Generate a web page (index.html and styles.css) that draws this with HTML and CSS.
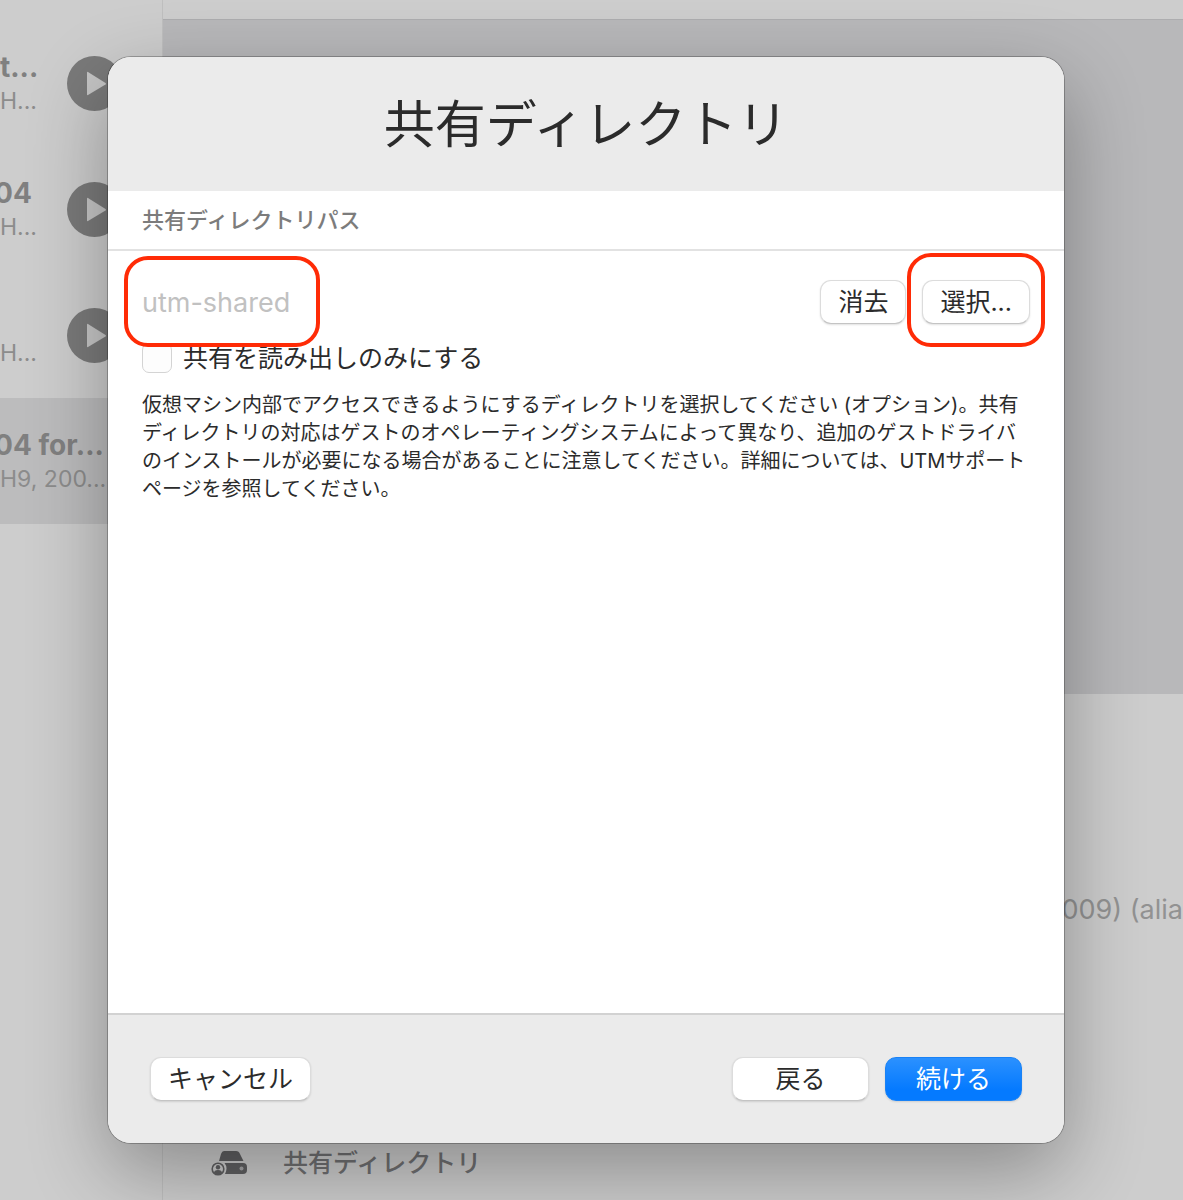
FILE: index.html
```html
<!DOCTYPE html>
<html lang="ja">
<head>
  <meta charset="UTF-8">
  <meta name="viewport" content="width=device-width, initial-scale=1.0">
  <title>共有ディレクトリ</title>
  <link rel="stylesheet" href="styles.css">
</head>
<body>
  <div class="window">
    <aside class="sidebar">
      <div class="vm">
        <div class="vm-text">
          <div class="vm-name">t...</div>
          <div class="vm-info">H...</div>
        </div>
        <button class="play" aria-label="Play">
          <svg viewBox="0 0 55 55" width="55" height="55"><circle cx="27.5" cy="27.5" r="27.5" fill="#7a7a7a"/><path d="M20 16.5v22q0 1 1 .5l17.500-10.500q1-.7 0-1.400L21 16q-1-.5-1 .5z" fill="#c6c6c6"/></svg>
        </button>
      </div>
      <div class="vm">
        <div class="vm-text">
          <div class="vm-name cut">04</div>
          <div class="vm-info">H...</div>
        </div>
        <button class="play" aria-label="Play">
          <svg viewBox="0 0 55 55" width="55" height="55"><circle cx="27.5" cy="27.5" r="27.5" fill="#7a7a7a"/><path d="M20 16.5v22q0 1 1 .5l17.500-10.500q1-.7 0-1.400L21 16q-1-.5-1 .5z" fill="#c6c6c6"/></svg>
        </button>
      </div>
      <div class="vm">
        <div class="vm-text">
          <div class="vm-name"></div>
          <div class="vm-info">H...</div>
        </div>
        <button class="play" aria-label="Play">
          <svg viewBox="0 0 55 55" width="55" height="55"><circle cx="27.5" cy="27.5" r="27.5" fill="#7a7a7a"/><path d="M20 16.5v22q0 1 1 .5l17.500-10.500q1-.7 0-1.400L21 16q-1-.5-1 .5z" fill="#c6c6c6"/></svg>
        </button>
      </div>
      <div class="vm selected">
        <div class="vm-text">
          <div class="vm-name cut">04 for...</div>
          <div class="vm-info">H9, 200...</div>
        </div>
      </div>
    </aside>

    <main class="main">
      <div class="toolbar"></div>
      <div class="screen"></div>
      <div class="details">
        <div class="machine">009) (alia</div>
        <div class="detail-row">
          <svg class="drive-icon" viewBox="0 0 36 26" width="36" height="26">
            <path d="M13 1h12q3 0 4 3l3.500 7H8l2-7q1-3 3-3z" fill="#606062"/>
            <path d="M13.500 13H32q4 0 4 4v3q0 4-4 4H14q1.500-3 1.500-5.500 0-3-2-5.500z" fill="#606062"/>
            <circle cx="30.500" cy="18.500" r="2" fill="#a5a5a7"/>
            <circle cx="7" cy="19" r="5.800" fill="none" stroke="#606062" stroke-width="1.600"/>
            <circle cx="7" cy="17.300" r="2.200" fill="#606062"/>
            <path d="M3 23q0-3 4-3t4 3q-4 3.500-8 0z" fill="#606062"/>
          </svg>
          <span>共有ディレクトリ</span>
        </div>
      </div>
    </main>
  </div>

  <form class="dialog">
    <header class="dialog-header">
      <h1>共有ディレクトリ</h1>
    </header>
    <h2 class="section-title">共有ディレクトリパス</h2>
    <div class="content">
      <div class="path-row">
        <div class="path marked">
          <input type="text" id="path" class="path-input" aria-label="共有ディレクトリパス" value="utm-shared" disabled>
        </div>
        <button type="button" class="btn">消去</button>
        <div class="choose marked">
          <button type="button" class="btn">選択...</button>
        </div>
      </div>
      <div class="check-row">
        <input type="checkbox" id="readonly" class="checkbox">
        <label for="readonly">共有を読み出しのみにする</label>
      </div>
      <p class="help">仮想マシン内部でアクセスできるようにするディレクトリを選択してください (オプション)。共有<br>ディレクトリの対応はゲストのオペレーティングシステムによって異なり、追加のゲストドライバ<br>のインストールが必要になる場合があることに注意してください。詳細については、UTMサポート<br>ページを参照してください。</p>
    </div>
    <footer class="dialog-footer">
      <button type="button" class="btn">キャンセル</button>
      <div class="footer-right">
        <button type="button" class="btn wide">戻る</button>
        <button type="submit" class="btn wide primary">続ける</button>
      </div>
    </footer>
  </form>
</body>
</html>
```

FILE: styles.css
```css
* {
  box-sizing: border-box;
}

body {
  margin: 0;
  height: 100vh;
  position: relative;
  overflow: hidden;
  font-family: Inter, "Noto Sans CJK JP", sans-serif;
  font-size: 25px;
  color: #2b2b2b;
  background: #cdcdcd;
}

button,
input {
  font: inherit;
  color: inherit;
}

.window {
  display: grid;
  grid-template-columns: 163px 1fr;
  height: 100%;
}

.sidebar {
  padding-top: 20px;
  border-right: 1px solid #bfbfbf;
  overflow: hidden;
}

.vm {
  display: flex;
  height: 126px;
  align-items: center;
  color: #8c8c8c;
  white-space: nowrap;
}

.vm.selected {
  background: #bcbcbd;
}

.vm-text {
  width: 67px;
  flex: none;
  padding-top: 2px;
}

.vm-name {
  height: 34px;
  line-height: 34px;
  font-size: 28px;
  font-weight: 700;
  color: #808080;
}

/* long names run off the left edge */
.vm-name.cut {
  margin-left: -6px;
}

.vm-info {
  font-size: 23px;
  line-height: 34px;
}

.play {
  padding: 0;
  border: none;
  background: none;
}

.play svg {
  display: block;
}

.main {
  display: grid;
  grid-template-rows: 19px 675px 1fr;
  min-width: 0;
}

.screen {
  background: #b8b8ba;
  border-top: 1px solid #adadaf;
}

.details {
  display: flex;
  flex-direction: column;
  justify-content: space-between;
  padding: 200px 0 19px;
  overflow: hidden;
}

.machine {
  align-self: flex-end;
  font-size: 27px;
  line-height: 32px;
  color: #929292;
}

.detail-row {
  display: flex;
  align-items: center;
  gap: 36px;
  padding-left: 48px;
  line-height: 36px;
  font-weight: 500;
  color: #707072;
}

/* sheet over the main window */
.dialog {
  position: absolute;
  top: 57px;
  right: 119px;
  bottom: 57px;
  left: 108px;
  display: flex;
  flex-direction: column;
  overflow: hidden;
  border-radius: 23px;
  background: #fff;
  box-shadow: 0 0 0 1px rgba(0, 0, 0, 0.25), 0 28px 80px rgba(0, 0, 0, 0.32);
}

.dialog-header {
  height: 134px;
  background: #ebebeb;
  text-align: center;
}

.dialog-header h1 {
  margin: 0;
  font-size: 51px;
  line-height: 136px;
  font-weight: 400;
}

.section-title {
  margin: 0;
  padding: 0 34px;
  font-size: 22px;
  line-height: 58px;
  font-weight: 500;
  color: #7c7c7c;
  border-bottom: 2px solid #e2e2e2;
}

.content {
  flex: 1;
  padding: 29px 34px 0;
}

.path-row {
  display: flex;
  gap: 16px;
}

.path {
  margin-right: auto;
}

.path-input {
  width: 160px;
  height: 44px;
  padding: 0;
  border: none;
  background: none;
  font-size: 27px;
  color: #c1c1c1;
}

/* red highlight boxes */
.marked {
  position: relative;
}

.marked::after {
  content: "";
  position: absolute;
  inset: -27px -15px -23px;
  border: 4px solid #ff2b06;
  border-radius: 24px;
  pointer-events: none;
}

.path.marked::after {
  inset: -24px -18px -23px;
}

.btn {
  height: 44px;
  padding: 0 17px;
  border: 1px solid #dcdcdc;
  border-bottom-color: #c4c4c4;
  border-radius: 11px;
  background: #fff;
  line-height: 40px;
  box-shadow: 0 1px 2px rgba(0, 0, 0, 0.12);
}

.check-row {
  display: flex;
  align-items: center;
  gap: 11px;
  margin-top: 16px;
  line-height: 36px;
}

.checkbox {
  appearance: none;
  width: 30px;
  height: 30px;
  margin: 0;
  border: 1px solid #d4d4d4;
  border-radius: 7px;
  background: #fdfdfd;
}

.help {
  margin: 15px 0 0;
  font-size: 20px;
  line-height: 28px;
  white-space: nowrap;
}

.dialog-footer {
  display: flex;
  justify-content: space-between;
  height: 130px;
  padding: 42px;
  border-top: 2px solid #d2d2d2;
  background: #ebebeb;
}

.footer-right {
  display: flex;
  gap: 16px;
}

.wide {
  width: 137px;
}

.primary {
  color: #fff;
  border-color: #1a82f5;
  background: linear-gradient(#2b91ff, #057aff 75%);
}
```
